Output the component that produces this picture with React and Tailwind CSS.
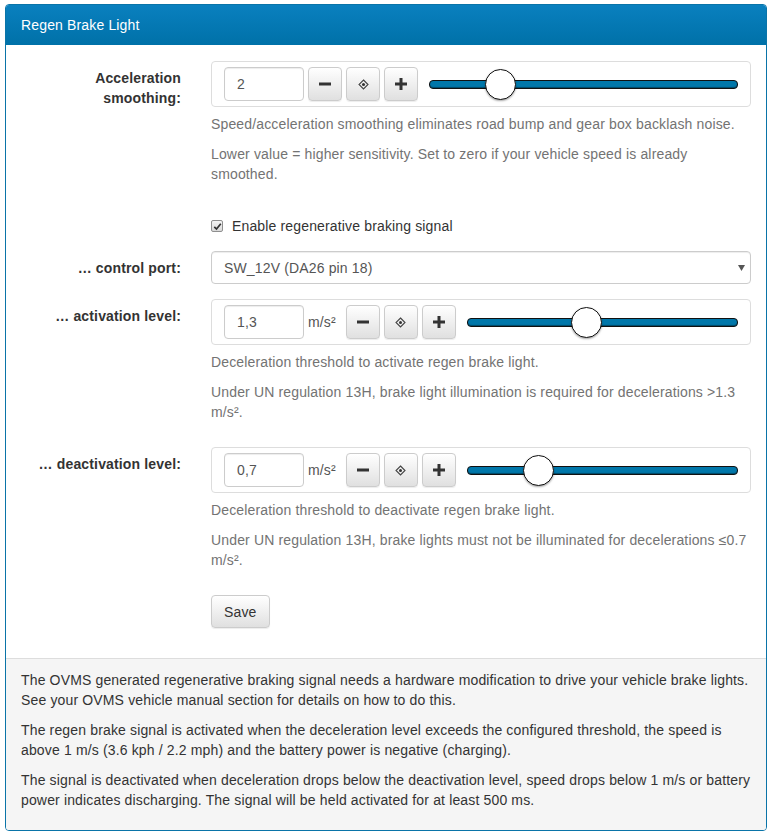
import React, { useState } from 'react';

const Minus = () => (
  <svg width="14" height="14" viewBox="0 0 14 14"><rect x="1" y="5.5" width="12" height="3" fill="#333" /></svg>
);
const Plus = () => (
  <svg width="14" height="14" viewBox="0 0 14 14"><rect x="1" y="5.5" width="12" height="3" fill="#333" /><rect x="5.5" y="1" width="3" height="12" fill="#333" /></svg>
);
const Target = () => (
  <svg width="11" height="11" viewBox="0 0 11 11">
    <path d="M5.5 1 L10 5.5 L5.5 10 L1 5.5 Z" fill="none" stroke="#444" strokeWidth="1.1" />
    <circle cx="5.5" cy="5.5" r="1.5" fill="#333" />
  </svg>
);

function Btn({ children }) {
  return (
    <button className="w-[34px] h-[34px] shrink-0 flex items-center justify-center rounded-[4px] border border-[#ccc] bg-gradient-to-b from-white to-[#e0e0e0] shadow-[inset_0_1px_0_rgba(255,255,255,.15),0_1px_1px_rgba(0,0,0,.075)]">
      {children}
    </button>
  );
}

function Slider({ pct }) {
  return (
    <div className="relative flex-1 h-[34px] flex items-center">
      <div className="w-full h-[9px] rounded-[4px] border border-[#111] bg-[#0077aa] shadow-[inset_0_-1px_1px_rgba(0,0,0,.4)]" />
      <div
        className="absolute top-[2px] w-[31px] h-[31px] rounded-full bg-white border border-[#111] shadow-[0_1px_2px_rgba(0,0,0,.35)]"
        style={{ left: `calc(${pct}% - ${pct * 0.31}px)` }}
      />
    </div>
  );
}

function NumberBox({ value, unit, pct }) {
  return (
    <div className="border border-[#ddd] rounded-[4px] px-3 py-[5px] flex items-center">
      <input
        readOnly
        value={value}
        className="w-[80px] h-[34px] shrink-0 rounded-[4px] border border-[#ccc] px-3 text-[14px] text-[#555] outline-none shadow-[inset_0_1px_1px_rgba(0,0,0,.075)]"
      />
      {unit && <span className="ml-[4px] text-[14px] text-[#555]">{unit}</span>}
      <div className={unit ? 'flex gap-1 ml-[10px]' : 'flex gap-1 ml-[4px]'}>
        <Btn><Minus /></Btn>
        <Btn><Target /></Btn>
        <Btn><Plus /></Btn>
      </div>
      <div className="ml-[11px] flex-1 flex">
        <Slider pct={pct} />
      </div>
    </div>
  );
}

function Row({ label, children, top = 'pt-[7px]' }) {
  return (
    <div className="flex">
      <label className={`w-[160px] shrink-0 text-right font-bold text-[#333] ${top}`}>{label}</label>
      <div className="ml-[30px] flex-1 min-w-0">{children}</div>
    </div>
  );
}

function Help({ lines }) {
  return (
    <div className="mt-[7px] text-[#737373]">
      {lines.map((l, i) => (
        <p key={i} className="mb-[10px]">{l}</p>
      ))}
    </div>
  );
}

export default function App() {
  const [enabled, setEnabled] = useState(true);

  return (
    <div className="px-[5px] pt-[4px] font-['Liberation_Sans',Arial,sans-serif] text-[14px] leading-[20px] tracking-[0.15px] text-[#333]">
      <div className="rounded-[4px] border border-[#0a74a8] overflow-hidden bg-white">
        <div className="h-[40px] px-[15px] flex items-center bg-gradient-to-b from-[#0a80bf] to-[#0071a8] text-white text-[14px]">
          Regen Brake Light
        </div>

        <div className="px-[15px] pt-[16px] pb-[15px]">
          <Row label="Acceleration smoothing:">
            <NumberBox value="2" pct={20} />
            <Help
              lines={[
                'Speed/acceleration smoothing eliminates road bump and gear box backlash noise.',
                'Lower value = higher sensitivity. Set to zero if your vehicle speed is already smoothed.',
              ]}
            />
          </Row>

          <div className="mt-[22px] flex">
            <div className="w-[160px] shrink-0" />
            <label className="ml-[30px] flex items-center gap-[9px] cursor-pointer" onClick={() => setEnabled(!enabled)}>
              <span className="w-[12px] h-[12px] rounded-[2px] border border-[#8f8f8f] bg-gradient-to-b from-[#f4f4f4] to-[#d9d9d9] flex items-center justify-center">
                {enabled && (
                  <svg width="9" height="9" viewBox="0 0 9 9">
                    <path d="M1.3 4.8 L3.5 7 L7.8 1.8" fill="none" stroke="#333" strokeWidth="1.7" />
                  </svg>
                )}
              </span>
              Enable regenerative braking signal
            </label>
          </div>

          <div className="mt-[15px]">
            <Row label="… control port:">
              <div className="relative h-[33px] rounded-[4px] border border-[#ccc] flex items-center px-3 text-[#555] shadow-[inset_0_1px_1px_rgba(0,0,0,.075)]">
                SW_12V (DA26 pin 18)
                <svg className="absolute right-[5px] top-[13px]" width="7" height="6" viewBox="0 0 7 6">
                  <path d="M0 0 H7 L3.5 6 Z" fill="#555" />
                </svg>
              </div>
            </Row>
          </div>

          <div className="mt-[15px]">
            <Row label="… activation level:">
              <NumberBox value="1,3" unit="m/s²" pct={43.3} />
              <Help
                lines={[
                  'Deceleration threshold to activate regen brake light.',
                  'Under UN regulation 13H, brake light illumination is required for decelerations >1.3 m/s².',
                ]}
              />
            </Row>
          </div>

          <div className="mt-[15px]">
            <Row label="… deactivation level:">
              <NumberBox value="0,7" unit="m/s²" pct={23.3} />
              <Help
                lines={[
                  'Deceleration threshold to deactivate regen brake light.',
                  'Under UN regulation 13H, brake lights must not be illuminated for decelerations ≤0.7 m/s².',
                ]}
              />
            </Row>
          </div>

          <div className="mt-[15px] flex">
            <div className="w-[160px] shrink-0" />
            <button className="ml-[30px] h-[33px] px-3 rounded-[4px] border border-[#ccc] bg-gradient-to-b from-white to-[#e0e0e0] text-[#333] shadow-[0_1px_1px_rgba(0,0,0,.075)]">
              Save
            </button>
          </div>
          <div className="h-[15px]" />
        </div>

        <div className="border-t border-[#ddd] bg-[#f5f5f5] px-[15px] pt-[11px] pb-[10px]">
          <p className="mb-[10px]">
            The OVMS generated regenerative braking signal needs a hardware modification to drive your vehicle brake lights. See your OVMS vehicle manual section for details on how to do this.
          </p>
          <p className="mb-[10px]">
            The regen brake signal is activated when the deceleration level exceeds the configured threshold, the speed is above 1 m/s (3.6 kph / 2.2 mph) and the battery power is negative (charging).
          </p>
          <p className="mb-[10px]">
            The signal is deactivated when deceleration drops below the deactivation level, speed drops below 1 m/s or battery power indicates discharging. The signal will be held activated for at least 500 ms.
          </p>
        </div>
      </div>
    </div>
  );
}
